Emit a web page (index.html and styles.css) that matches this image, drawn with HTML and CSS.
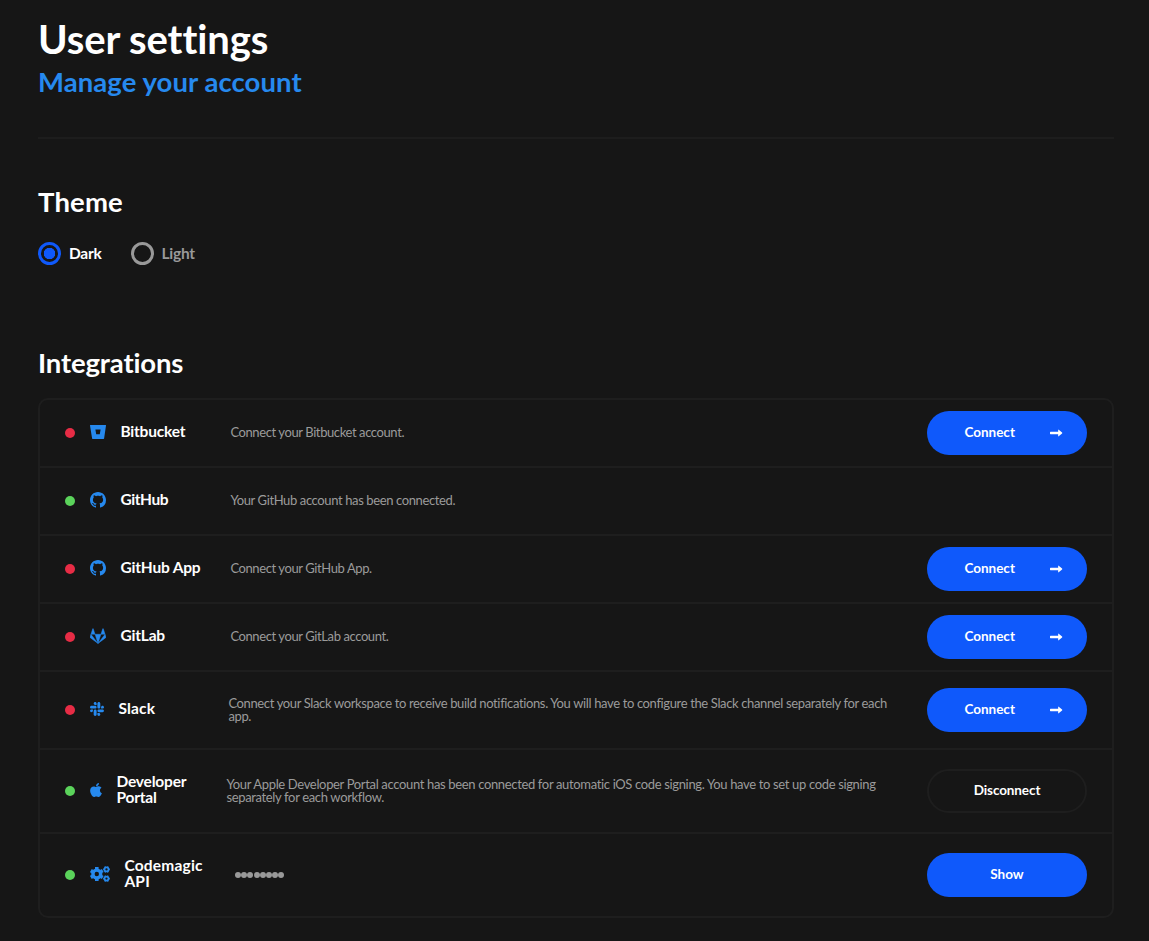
FILE: index.html
```html
<!DOCTYPE html>
<html lang="en">
<head>
<meta charset="utf-8">
<title>User settings</title>
<link rel="stylesheet" href="styles.css">
</head>
<body>
<svg class="sprite" aria-hidden="true">
  <symbol id="bitbucket" viewBox="0 0 16 16"><path fill-rule="evenodd" d="M.4 1h15.2a.4.4 0 0 1 .4.5L14.1 14.6a.5.5 0 0 1-.5.4H2.6a.5.5 0 0 1-.5-.4L0 1.500A.4.4 0 0 1 .4 1zM5.400 5.500 6.200 10.200H9.800L10.600 5.500z"/></symbol>
  <symbol id="github" viewBox="0 0 16 16"><path d="M8 0C3.58 0 0 3.58 0 8c0 3.54 2.29 6.53 5.47 7.59.4.07.55-.17.55-.38 0-.19-.01-.82-.01-1.49-2.01.37-2.53-.49-2.69-.94-.09-.23-.48-.94-.82-1.13-.28-.15-.68-.52-.01-.53.63-.01 1.08.58 1.23.82.72 1.21 1.87.87 2.33.66.07-.52.28-.87.51-1.07-1.78-.2-3.64-.89-3.64-3.95 0-.87.31-1.59.82-2.15-.08-.2-.36-1.02.08-2.12 0 0 .67-.21 2.2.82.64-.18 1.32-.27 2-.27s1.36.09 2 .27c1.53-1.04 2.2-.82 2.2-.82.44 1.1.16 1.92.08 2.12.51.56.82 1.27.82 2.15 0 3.07-1.87 3.75-3.65 3.95.29.25.54.73.54 1.48 0 1.07-.01 1.93-.01 2.2 0 .21.15.46.55.38A8.01 8.01 0 0 0 16 8c0-4.42-3.58-8-8-8z"/></symbol>
  <symbol id="gitlab" viewBox="0 0 512 512"><path stroke="currentColor" stroke-width="14" d="M105.2 24.9c-3.1-8.9-15.7-8.9-18.9 0L29.8 199.7h132c-.1 0-56.6-174.8-56.6-174.8zM.9 287.7c-2.6 8 .3 16.9 7.1 22l247.9 184-226.2-294zm160.8-88l94.3 294 94.3-294zm349.4 88l-28.8-88-226.3 294 247.9-184c6.9-5.1 9.7-14 7.2-22zM425.7 24.9c-3.1-8.9-15.7-8.9-18.9 0l-56.6 174.8h132z"/></symbol>
  <symbol id="slack" viewBox="0 0 448 512"><path d="M94.12 315.1c0 25.9-21.16 47.06-47.06 47.06S0 341 0 315.1c0-25.9 21.16-47.06 47.06-47.06h47.06v47.06zm23.72 0c0-25.9 21.16-47.06 47.06-47.06s47.06 21.16 47.06 47.06v117.84c0 25.9-21.16 47.06-47.06 47.06s-47.06-21.16-47.06-47.06V315.1zm47.06-188.98c-25.9 0-47.06-21.16-47.06-47.06S139 32 164.9 32s47.06 21.16 47.06 47.06v47.06H164.9zm0 23.72c25.9 0 47.06 21.16 47.06 47.06s-21.16 47.06-47.06 47.06H47.06C21.16 243.96 0 222.8 0 196.9s21.16-47.06 47.06-47.06H164.9zm188.98 47.06c0-25.9 21.16-47.06 47.06-47.06 25.9 0 47.06 21.16 47.06 47.06s-21.16 47.06-47.06 47.06h-47.06V196.9zm-23.72 0c0 25.9-21.16 47.06-47.06 47.06-25.9 0-47.06-21.16-47.06-47.06V79.06c0-25.9 21.16-47.06 47.06-47.06 25.9 0 47.06 21.16 47.06 47.06V196.9zM283.1 385.88c25.9 0 47.06 21.16 47.06 47.06 0 25.9-21.16 47.06-47.06 47.06-25.9 0-47.06-21.16-47.06-47.06v-47.06h47.06zm0-23.72c-25.9 0-47.06-21.16-47.06-47.06 0-25.9 21.16-47.06 47.06-47.06h117.84c25.9 0 47.06 21.16 47.06 47.06 0 25.9-21.16 47.06-47.06 47.06H283.1z"/></symbol>
  <symbol id="apple" viewBox="0 0 384 512"><path d="M318.7 268.7c-.2-36.7 16.4-64.4 50-84.8-18.8-26.9-47.2-41.7-84.7-44.6-35.5-2.8-74.3 20.7-88.5 20.7-15 0-49.4-19.7-76.4-19.7C63.3 141.2 4 184.8 4 273.5q0 39.3 14.4 81.2c12.8 36.7 59 126.7 107.2 125.2 25.2-.6 43-17.9 75.8-17.9 31.8 0 48.3 17.9 76.4 17.9 48.6-.7 90.4-82.5 102.6-119.3-65.2-30.7-61.7-90-61.7-91.9zm-56.6-164.2c27.3-32.4 24.8-61.900 24-72.500-24.1 1.4-52 16.4-67.9 34.900-17.5 19.8-27.8 44.3-25.6 71.900 26.1 2 49.9-11.400 69.500-34.300z"/></symbol>
  <symbol id="cogs" viewBox="0 0 20 16">
    <g fill="none" stroke="currentColor">
      <circle cx="6.800" cy="8" r="3.900" stroke-width="3.400"/>
      <path stroke-width="3.600" d="M6.800 3.500V1.100M6.800 12.500V14.900M2.900 5.750.850 4.550M10.700 10.250 12.750 11.450M2.900 10.250.850 11.450M10.700 5.750 12.750 4.550"/>
      <circle cx="16.500" cy="3.400" r="2" stroke-width="1.700"/>
      <circle cx="16.500" cy="12.600" r="2" stroke-width="1.700"/>
      <path stroke-width="1.600" d="M15.300 1.300 14.900.500M17.700 1.300 18.100.500M15.300 5.500 14.900 6.300M17.700 5.500 18.100 6.300M14.100 3.400H13.200M18.900 3.400H19.800M15.300 10.500 14.900 9.700M17.700 10.500 18.100 9.700M15.300 14.700 14.900 15.500M17.700 14.700 18.100 15.500M14.100 12.600H13.200M18.900 12.600H19.800"/>
    </g>
  </symbol>
  <symbol id="arrow" viewBox="0 0 14 8"><path d="M.5 2.700h8.300V1Q8.800-.1 9.700.700L13 3.500q.5.500 0 1L9.700 7.300Q8.800 8.100 8.800 7V5.300H.5Q0 5.300 0 4.800V3.200Q0 2.700.500 2.700z"/></symbol>
</svg>
<main class="page">
  <header class="page-header">
    <h1 class="title">User settings</h1>
    <p class="subtitle">Manage your account</p>
  </header>
  <section class="theme">
    <h2 class="heading wide">Theme</h2>
    <div class="options">
      <div class="option selected"><span class="radio"></span><span>Dark</span></div>
      <div class="option"><span class="radio"></span><span>Light</span></div>
    </div>
  </section>
  <section class="integrations">
    <h2 class="heading">Integrations</h2>
    <ul class="list">
      <li class="row bitbucket"><span class="dot off"></span><svg class="icon w16"><use href="#bitbucket"/></svg><h3 class="name">Bitbucket</h3><p class="desc">Connect your Bitbucket account.</p><button class="btn primary"><span>Connect</span><svg class="arrow"><use href="#arrow"/></svg></button></li>
      <li class="row github"><span class="dot on"></span><svg class="icon w16"><use href="#github"/></svg><h3 class="name">GitHub</h3><p class="desc">Your GitHub account has been connected.</p></li>
      <li class="row github-app"><span class="dot off"></span><svg class="icon w16"><use href="#github"/></svg><h3 class="name">GitHub App</h3><p class="desc">Connect your GitHub App.</p><button class="btn primary"><span>Connect</span><svg class="arrow"><use href="#arrow"/></svg></button></li>
      <li class="row gitlab"><span class="dot off"></span><svg class="icon w16"><use href="#gitlab"/></svg><h3 class="name">GitLab</h3><p class="desc">Connect your GitLab account.</p><button class="btn primary"><span>Connect</span><svg class="arrow"><use href="#arrow"/></svg></button></li>
      <li class="row medium slack"><span class="dot off"></span><svg class="icon w14"><use href="#slack"/></svg><h3 class="name">Slack</h3><p class="desc">Connect your Slack workspace to receive build notifications. You will have to configure the Slack channel separately for each<br>app.</p><button class="btn primary"><span>Connect</span><svg class="arrow"><use href="#arrow"/></svg></button></li>
      <li class="row tall apple"><span class="dot on"></span><svg class="icon w12"><use href="#apple"/></svg><h3 class="name">Developer<br>Portal</h3><p class="desc">Your Apple Developer Portal account has been connected for automatic iOS code signing. You have to set up code signing<br>separately for each workflow.</p><button class="btn outline"><span>Disconnect</span></button></li>
      <li class="row tall codemagic"><span class="dot on"></span><svg class="icon w20"><use href="#cogs"/></svg><h3 class="name">Codemagic<br>API</h3><p class="desc secret"><i></i><i></i><i></i><i></i><i></i><i></i><i></i><i></i></p><button class="btn primary center"><span>Show</span></button></li>
    </ul>
  </section>
</main>
</body>
</html>
```
FILE: styles.css
```css
* { box-sizing: border-box; margin: 0; padding: 0; }
body { background: #161616; color: #fff; font-family: Lato, sans-serif; font-weight: 700; font-variant-ligatures: none; height: 941px; overflow: hidden; }
.sprite { display: none; }
.page { padding: 15px 35px 0 38px; }
.page-header { height: 124px; border-bottom: 2px solid #1d1d1d; }
.title { font-size: 40px; line-height: 48px; font-weight: 700; letter-spacing: -.1px; }
.subtitle { font-size: 27.500px; line-height: 38px; color: #2689ee; letter-spacing: .06px; }
.theme { padding-top: 46px; height: 207px; }
.heading { font-size: 27.500px; line-height: 34px; letter-spacing: -.15px; }
.heading.wide { letter-spacing: .15px; }
.options { display: flex; gap: 29px; margin-top: 23px; }
.option { display: flex; align-items: center; gap: 8px; font-size: 15.500px; line-height: 23px; color: #999; letter-spacing: -.25px; }
.option.selected { color: #fff; }
.radio { width: 23px; height: 23px; border: 3px solid #999; border-radius: 50%; }
.selected .radio { border-color: #0f59fb; background: radial-gradient(circle, #0f59fb 5.500px, transparent 6px); }
.list { list-style: none; border: 2px solid #1e1e1e; border-radius: 10px; margin-top: 18px; }
.row { display: flex; align-items: center; height: 68px; padding: 0 25px; border-bottom: 2px solid #1e1e1e; }
.row.medium { height: 78px; }
.row.tall { height: 84px; }
.row:last-child { border-bottom: 0; height: 82px; }
.dot { width: 10px; height: 10px; border-radius: 50%; margin-right: 15px; }
.off { background: #e72c45; }
.on { background: #5bd35b; }
.icon { height: 16px; margin-right: 14px; margin-bottom: 2px; fill: #2689ee; color: #2689ee; }
.w16 { width: 16px; }
.w14 { width: 14px; }
.w12 { width: 12px; }
.w20 { width: 20px; }
.name { width: 110px; padding-left: .4px; font-size: 15.500px; line-height: 16px; margin-bottom: 4px; white-space: nowrap; letter-spacing: -.18px; }
.github .name { letter-spacing: -.4px; }
.slack .name, .codemagic .name { letter-spacing: .2px; }
.desc { flex: 1; padding-left: .4px; font-size: 13px; line-height: 13px; font-weight: 400; color: #9b9b9b; white-space: nowrap; letter-spacing: -.4px; margin-bottom: 1px; }
.github .desc { letter-spacing: -.38px; }
.slack .desc { letter-spacing: -.365px; }
.apple .desc { letter-spacing: -.345px; }
.secret { display: flex; padding-left: 1px; gap: .2px; margin-bottom: 0; }
.secret i { width: 6px; height: 6px; border-radius: 50%; background: #999; }
.btn { display: flex; align-items: center; justify-content: space-between; width: 160px; height: 44px; border: 0; border-radius: 22px; padding: 0 24px 0 37.400px; font: 700 13.500px/16px Lato, sans-serif; color: #fff; background: #0f59fb; }
.btn span { margin-bottom: 2px; }
.btn.center, .btn.outline { justify-content: center; padding: 0; }
.btn.outline { background: transparent; border: 2px solid #1e1e1e; letter-spacing: -.1px; }
.arrow { width: 13px; height: 8px; fill: #fff; }
```
